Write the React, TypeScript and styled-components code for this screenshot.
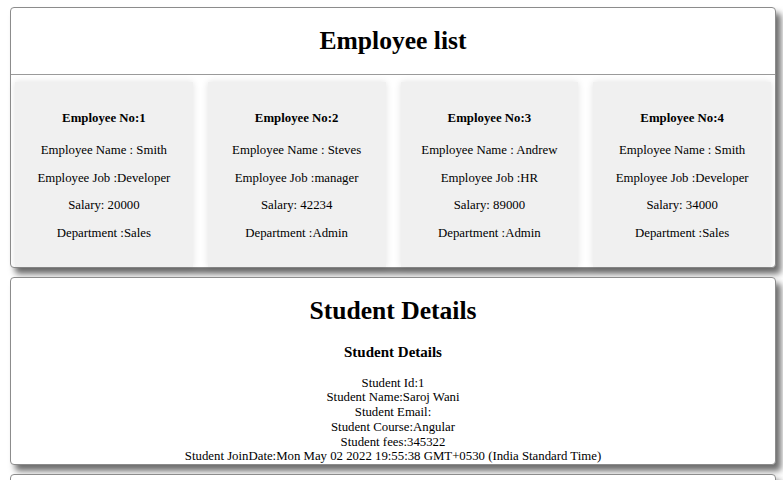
import React from "react";
import styled, { createGlobalStyle } from "styled-components";

const GlobalStyle = createGlobalStyle`
  html, body {
    margin: 0;
    padding: 0;
    background: #ffffff;
  }
  body {
    font-family: "Liberation Serif", "Times New Roman", serif;
    font-size: 12.8px;
    color: #000;
  }
`;

const Page = styled.div`
  display: flex;
  flex-direction: column;
  gap: 9px;
  padding: 7px 7px 0 10px;
`;

const Panel = styled.section`
  background: #fff;
  border: 1px solid #8c8c8c;
  border-radius: 4px;
  box-shadow: 5px 6px 6px #6e6e6e;
  text-align: center;
`;

const PanelTitle = styled.h1`
  margin: 18px 0 0;
  font-size: 25.6px;
  font-weight: bold;
  line-height: 29px;
`;

const Divider = styled.hr`
  margin: 19px 0 7px;
  border: none;
  border-top: 1px solid #9a9a9a;
  height: 0;
`;

const CardGrid = styled.div`
  display: grid;
  grid-template-columns: repeat(4, 1fr);
  gap: 15px;
  padding: 0 4px;
`;

const EmployeeCard = styled.div`
  display: flex;
  flex-direction: column;
  align-items: center;
  background: #f0f0f0;
  box-shadow: 0 0 7px rgba(0, 0, 0, 0.12);
  padding: 29px 6px 26px;
`;

const CardTitle = styled.h4`
  margin: 0 0 17px;
  font-size: 12.8px;
  font-weight: bold;
  line-height: 15px;
`;

const CardLines = styled.div`
  display: flex;
  flex-direction: column;
  gap: 12.5px;
`;

const CardLine = styled.p`
  margin: 0;
  line-height: 15px;
`;

const SubTitle = styled.h3`
  margin: 19px 0 15px;
  font-size: 15px;
  font-weight: bold;
  line-height: 17px;
`;

const InfoLine = styled.div`
  line-height: 14.8px;
`;

const BottomPanel = styled(Panel)`
  height: 40px;
`;

type Employee = {
  no: number;
  name: string;
  job: string;
  salary: number;
  dept: string;
};

const employees: Employee[] = [
  { no: 1, name: "Smith", job: "Developer", salary: 20000, dept: "Sales" },
  { no: 2, name: "Steves", job: "manager", salary: 42234, dept: "Admin" },
  { no: 3, name: "Andrew", job: "HR", salary: 89000, dept: "Admin" },
  { no: 4, name: "Smith", job: "Developer", salary: 34000, dept: "Sales" },
];

const studentLines = [
  "Student Id:1",
  "Student Name:Saroj Wani",
  "Student Email:",
  "Student Course:Angular",
  "Student fees:345322",
  "Student JoinDate:Mon May 02 2022 19:55:38 GMT+0530 (India Standard Time)",
];

export default function App() {
  return (
    <>
      <GlobalStyle />
      <Page>
        <Panel>
          <PanelTitle>Employee list</PanelTitle>
          <Divider />
          <CardGrid>
            {employees.map((e) => (
              <EmployeeCard key={e.no}>
                <CardTitle>Employee No:{e.no}</CardTitle>
                <CardLines>
                  <CardLine>Employee Name : {e.name}</CardLine>
                  <CardLine>Employee Job :{e.job}</CardLine>
                  <CardLine>Salary: {e.salary}</CardLine>
                  <CardLine>Department :{e.dept}</CardLine>
                </CardLines>
              </EmployeeCard>
            ))}
          </CardGrid>
        </Panel>
        <Panel>
          <PanelTitle>Student Details</PanelTitle>
          <SubTitle>Student Details</SubTitle>
          {studentLines.map((l) => (
            <InfoLine key={l}>{l}</InfoLine>
          ))}
        </Panel>
        <BottomPanel />
      </Page>
    </>
  );
}
